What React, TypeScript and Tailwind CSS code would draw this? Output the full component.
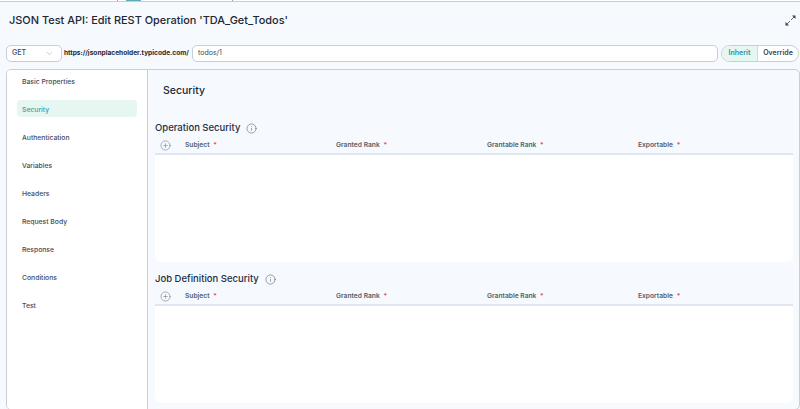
import React from 'react';
import { ChevronDown, Info, CirclePlus } from 'lucide-react';

const sections = [
  'Basic Properties',
  'Security',
  'Authentication',
  'Variables',
  'Headers',
  'Request Body',
  'Response',
  'Conditions',
  'Test',
];

const columns = ['Subject', 'Granted Rank', 'Grantable Rank', 'Exportable'];

function SecurityTable({ title, bodyHeight }: { title: string; bodyHeight: string }) {
  return (
    <div>
      <div className="flex items-center gap-[6px] h-[16px]">
        <h3 className="text-[9.5px] font-medium text-[#1f2f3f] whitespace-nowrap">{title}</h3>
        <Info size={11} strokeWidth={1.25} className="text-[#555e68]" />
      </div>
      <div className="flex items-center h-[19px] pt-[2px] border-b-2 border-[#dfe6f2]">
        <div className="w-[30px] pl-[5px] flex items-center">
          <CirclePlus size={11} strokeWidth={1} className="text-[#555e68]" />
        </div>
        {columns.map((col) => (
          <div key={col} className="w-[151px] text-[6.7px] font-semibold text-[#555e68] whitespace-nowrap">
            {col} <span className="text-[#e5484d] ml-[2px]">*</span>
          </div>
        ))}
      </div>
      <div className={`bg-white rounded-b-[6px] ${bodyHeight}`} />
    </div>
  );
}

export default function App() {
  return (
    <div className="w-[800px] h-[409px] overflow-hidden bg-[#f6f9fe] font-['Inter',sans-serif] flex flex-col">
      {/* Strip of the page behind the dialog */}
      <div className="h-[2px] bg-white border-b border-[#c9ccd4] flex shrink-0">
        <div className="w-[118px] border-r border-[#9aa3ad]" />
        <div className="ml-[8px] w-[15px] bg-[#5fa8b8]" />
        <div className="w-[92px] border-r border-[#9aa3ad]" />
      </div>

      <div className="flex items-center justify-between h-[34px] pl-[9px] pr-[4px] mt-[1px] shrink-0">
        <h1 className="text-[10.95px] font-medium text-[#1b2733] whitespace-nowrap">
          JSON Test API: Edit REST Operation 'TDA_Get_Todos'
        </h1>
        <svg width="11" height="11" viewBox="0 0 11 11" fill="none" className="text-[#37424d]">
          <path d="M6 5 L9.5 1.5" stroke="currentColor" strokeWidth="0.8" />
          <path d="M7 0.5 H10.5 V4 Z" fill="currentColor" />
          <path d="M5 6 L1.5 9.5" stroke="currentColor" strokeWidth="0.8" />
          <path d="M0.5 7 V10.5 H4 Z" fill="currentColor" />
        </svg>
      </div>

      <div className="flex items-center h-[17px] mt-[8px] pl-[6px] shrink-0">
        <div className="w-[56px] h-[17px] flex items-center justify-between pl-[5px] pr-[7px] bg-white border border-[#c9ced6] rounded-[5px] text-[7px] font-medium text-[#3d4853]">
          GET
          <ChevronDown size={9} strokeWidth={1} className="text-[#6b7480]" />
        </div>
        <div className="ml-[2px] w-[128px] text-[6.6px] font-bold text-[#1f2933] whitespace-nowrap">
          https://jsonplaceholder.typicode.com/
        </div>
        <div className="w-[526px] h-[17px] flex items-center pl-[5px] bg-white border border-[#c9ced6] rounded-[5px] text-[7px] text-[#3d4853]">
          todos/1
        </div>
        <div className="ml-[3px] flex w-[78px] h-[17px] bg-white border border-[#c9ced6] rounded-full overflow-hidden text-[7px] font-semibold">
          <div className="w-[36px] flex items-center justify-center bg-[#e6f6f1] text-[#2a93a0] border-r border-[#bfe3d9]">
            Inherit
          </div>
          <div className="flex-1 flex items-center justify-center text-[#37424d]">Override</div>
        </div>
      </div>

      <div className="flex h-[341px] shrink-0 mt-[7px] ml-[6px] border border-[#c9ced6] rounded-[5px] overflow-hidden">
        <nav className="w-[141px] shrink-0 bg-white border-r border-[#c9ced6] px-[10px] pt-[2px] flex flex-col gap-[11px]">
          {sections.map((s) => (
            <div
              key={s}
              className={`h-[17px] shrink-0 flex items-center pl-[5px] pt-[3px] rounded-[4px] text-[6.8px] font-medium ${
                s === 'Security' ? 'bg-[#e6f6f1] text-[#3a9ea6]' : 'text-[#3f4c59]'
              }`}
            >
              {s}
            </div>
          ))}
        </nav>

        <main className="flex-1 pl-[7px] pr-[6px]">
          <h2 className="text-[10.5px] font-medium text-[#1b2733] ml-[8px] mt-[13px] h-[16px] leading-[16px]">
            Security
          </h2>
          <div className="mt-[21px]">
            <SecurityTable title="Operation Security" bodyHeight="h-[107px]" />
          </div>
          <div className="mt-[9px]">
            <SecurityTable title="Job Definition Security" bodyHeight="h-[97px]" />
          </div>
        </main>
      </div>
    </div>
  );
}
